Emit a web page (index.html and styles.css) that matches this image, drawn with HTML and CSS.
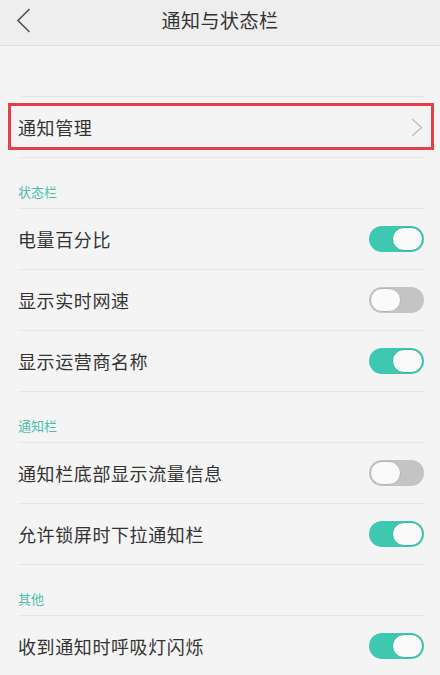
FILE: index.html
```html
<!DOCTYPE html>
<html lang="zh-CN">
<head>
<meta charset="utf-8">
<title>通知与状态栏</title>
<link rel="stylesheet" href="styles.css">
</head>
<body>
<header class="topbar">
  <svg class="back" width="14" height="26" viewBox="0 0 14 26"><polyline points="12.5,1 1,12.5 12.5,24" fill="none" stroke="#555" stroke-width="1.6"/></svg>
  <div class="title">通知与状态栏</div>
</header>
<div class="spacer"></div>
<main class="list">
  <div class="row row-link">
    <span class="label">通知管理</span>
    <svg class="chev" width="12" height="19" viewBox="0 0 12 19"><polyline points="1,1 10.5,9.5 1,18" fill="none" stroke="#bdbdbd" stroke-width="1.3"/></svg>
  </div>
  <div class="section">状态栏</div>
  <div class="row"><span class="label">电量百分比</span><span class="toggle on"><span class="knob"></span></span></div>
  <div class="row"><span class="label">显示实时网速</span><span class="toggle"><span class="knob"></span></span></div>
  <div class="row"><span class="label">显示运营商名称</span><span class="toggle on"><span class="knob"></span></span></div>
  <div class="section">通知栏</div>
  <div class="row"><span class="label">通知栏底部显示流量信息</span><span class="toggle"><span class="knob"></span></span></div>
  <div class="row"><span class="label">允许锁屏时下拉通知栏</span><span class="toggle on"><span class="knob"></span></span></div>
  <div class="section">其他</div>
  <div class="row"><span class="label">收到通知时呼吸灯闪烁</span><span class="toggle on"><span class="knob"></span></span></div>
</main>
</body>
</html>
```

FILE: styles.css
```css
* { box-sizing: border-box; }
html, body { margin: 0; padding: 0; }
body {
  background: #f4f4f4;
  font-family: "Noto Sans CJK SC", "Noto Sans", sans-serif;
  color: #333;
  width: 440px;
  height: 675px;
  overflow: hidden;
}
.topbar {
  height: 46px;
  background: #eeeeee;
  border-bottom: 1px solid #e0e0e0;
  display: flex;
  align-items: center;
  justify-content: center;
  position: relative;
}
.back {
  position: absolute;
  left: 17px;
  top: 8px;
}
.title {
  font-size: 19px;
  color: #333;
  letter-spacing: 0.5px;
  margin-top: -6px;
}
.spacer { height: 50px; }
.list {
  margin: 0 15px 0 18px;
}
.row {
  height: 61px;
  border-top: 1px solid #e6e6e6;
  display: flex;
  align-items: center;
  justify-content: space-between;
}
.row-link { position: relative; }
.row-link::after {
  content: "";
  position: absolute;
  left: -10px;
  right: -9px;
  top: 6px;
  height: 41px;
  border: 3px solid #e2404a;
}
.label {
  font-size: 18px;
  letter-spacing: 0.6px;
  color: #333;
}
.chev { margin-right: 2px; }
.section {
  height: 51px;
  border-top: 1px solid #e6e6e6;
  display: flex;
  align-items: flex-end;
  padding-bottom: 7px;
  font-size: 13px;
  line-height: 18px;
  color: #4dbfae;
}
.toggle {
  width: 55px;
  height: 26px;
  border-radius: 13px;
  background: #c4c4c4;
  display: flex;
  align-items: center;
  padding: 1px;
  margin-right: 1px;
}
.knob {
  width: 31px;
  height: 24px;
  border-radius: 12px;
  background: #fafafa;
  border: 1px solid #b4b4b4;
}
.toggle.on {
  background: #3ec8b2;
  justify-content: flex-end;
}
.toggle.on .knob {
  border-color: #36b39f;
}
```
